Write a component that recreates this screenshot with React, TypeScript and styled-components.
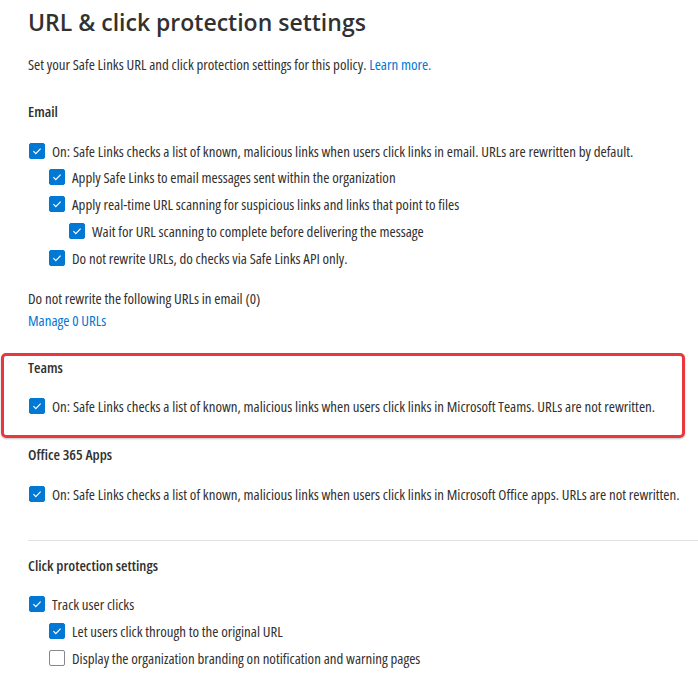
import * as React from "react";
import styled, { createGlobalStyle } from "styled-components";

const GlobalStyle = createGlobalStyle`
	body {
		margin: 0;
		background: #ffffff;
		font-family: "Open Sans", "Liberation Sans", sans-serif;
		font-stretch: 75%;
		color: #323130;
	}
`;

type Item = {
	label: string;
	checked: boolean;
	level: number;
};

const emailItems: Item[] = [
	{
		label:
			"On: Safe Links checks a list of known, malicious links when users click links in email. URLs are rewritten by default.",
		checked: true,
		level: 0,
	},
	{ label: "Apply Safe Links to email messages sent within the organization", checked: true, level: 1 },
	{ label: "Apply real-time URL scanning for suspicious links and links that point to files", checked: true, level: 1 },
	{ label: "Wait for URL scanning to complete before delivering the message", checked: true, level: 2 },
	{ label: "Do not rewrite URLs, do checks via Safe Links API only.", checked: true, level: 1 },
];

const clickItems: Item[] = [
	{ label: "Track user clicks", checked: true, level: 0 },
	{ label: "Let users click through to the original URL", checked: true, level: 1 },
	{ label: "Display the organization branding on notification and warning pages", checked: false, level: 1 },
];

const Check: React.FC<Item> = ({ label, checked, level }) => (
	<Row $level={level}>
		<Box $checked={checked}>
			{checked && (
				<svg width="12" height="12" viewBox="0 0 12 12">
					<path d="M2.4 6.2 L4.8 8.6 L9.6 3.6" fill="none" stroke="#fff" strokeWidth="1.2" />
				</svg>
			)}
		</Box>
		<Label>{label}</Label>
	</Row>
);

const App: React.FC = (): JSX.Element => {
	return (
		<Page>
			<GlobalStyle />
			<Title>URL &amp; click protection settings</Title>
			<Intro>
				Set your Safe Links URL and click protection settings for this policy. <Link>Learn more.</Link>
			</Intro>

			<Section>
				<Heading $top={29}>Email</Heading>
				<List>
					{emailItems.map((it) => (
						<Check key={it.label} {...it} />
					))}
				</List>
				<SubHeading>Do not rewrite the following URLs in email (0)</SubHeading>
				<ManageLink>Manage 0 URLs</ManageLink>
			</Section>

			<Highlight>
				<Heading $top={2}>Teams</Heading>
				<List>
					<Check
						label="On: Safe Links checks a list of known, malicious links when users click links in Microsoft Teams. URLs are not rewritten."
						checked
						level={0}
					/>
				</List>
			</Highlight>

			<Section>
				<Heading $top={7}>Office 365 Apps</Heading>
				<List>
					<Check
						label="On: Safe Links checks a list of known, malicious links when users click links in Microsoft Office apps. URLs are not rewritten."
						checked
						level={0}
					/>
				</List>
			</Section>

			<Divider />

			<Section>
				<Heading $top={15}>Click protection settings</Heading>
				<List>
					{clickItems.map((it) => (
						<Check key={it.label} {...it} />
					))}
				</List>
			</Section>
		</Page>
	);
};

export default App;

const Page = styled.div`
	width: 698px;
	height: 691px;
	overflow: hidden;
	box-sizing: border-box;
	padding: 6px 0 0 0;
	font-size: 14.9px;
`;

const Title = styled.h1`
	margin: 0 0 0 28px;
	font-size: 23px;
	font-weight: 600;
	font-stretch: 100%;
	line-height: 32px;
	color: #323130;
`;

const Intro = styled.p`
	margin: 17px 0 0 28px;
	line-height: 18px;
`;

const Link = styled.span`
	color: #0078d4;
	display: inline-block;
	line-height: 18px;
`;

const ManageLink = styled(Link)`
	margin-top: 4px;
`;

const Section = styled.div`
	padding: 0 0 0 28px;
`;

const Highlight = styled.div`
	margin: 23px 13px 0 1px;
	border: 3px solid #e8383d;
	border-radius: 5px;
	padding: 0 0 20px 24px;
	box-shadow: 0 1px 2px rgba(0, 0, 0, 0.25);
`;

const Heading = styled.div<{ $top: number }>`
	font-weight: 600;
	line-height: 18px;
	margin-top: ${(p) => p.$top}px;
`;

const SubHeading = styled.div`
	margin-top: 22px;
	line-height: 18px;
`;

const List = styled.div`
	display: flex;
	flex-direction: column;
	gap: 8.75px;
	margin-top: 21.5px;
`;

const Row = styled.div<{ $level: number }>`
	display: flex;
	align-items: center;
	gap: 7px;
	padding-left: ${(p) => p.$level * 20 + 1}px;
	height: 18px;
	white-space: nowrap;
`;

const Box = styled.span<{ $checked: boolean }>`
	flex: 0 0 auto;
	box-sizing: border-box;
	width: 16px;
	height: 16px;
	border-radius: 2px;
	display: flex;
	align-items: center;
	justify-content: center;
	background: ${(p) => (p.$checked ? "#0078d4" : "#ffffff")};
	border: 1px solid ${(p) => (p.$checked ? "#0078d4" : "#8a8886")};
`;

const Label = styled.span`
	line-height: 18px;
`;

const Divider = styled.hr`
	border: none;
	border-top: 1px solid #e1e1e1;
	margin: 37px 0 0 28px;
`;
